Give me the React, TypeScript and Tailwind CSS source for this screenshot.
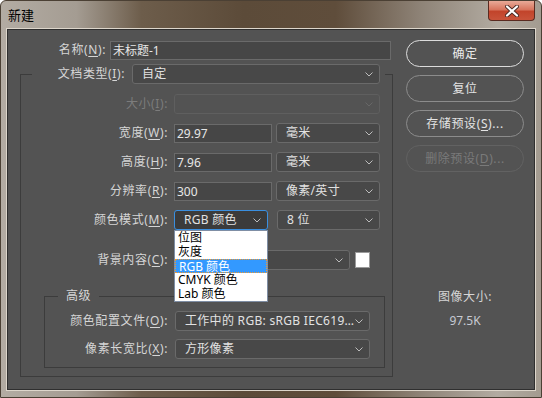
import React from 'react';

const font = "font-['Noto_Sans','Noto_Sans_CJK_SC',sans-serif]";

function Chevron({ dim }: { dim?: boolean }) {
  return (
    <svg width="8" height="5" viewBox="0 0 8 5" className="shrink-0">
      <path d="M0.5 0.5L4 4L7.5 0.5" fill="none" stroke={dim ? '#676767' : '#bdbdbd'} strokeWidth="1" />
    </svg>
  );
}

function Label({ t, k, w, dim }: { t: string; k: string; w: string; dim?: boolean }) {
  return (
    <div className={`shrink-0 text-right leading-[20px] tracking-[0.6px] ${w} ${dim ? 'text-[#7c7c7c]' : 'text-[#d6d6d6]'}`}>
      {t}(<span className="underline underline-offset-2">{k}</span>):
    </div>
  );
}

function Select({ w, text, disabled, focus, children }: {
  w: string; text?: string; disabled?: boolean; focus?: boolean; children?: React.ReactNode;
}) {
  const border = focus
    ? 'border-[#3a8fe0] bg-[#3b3b3b]'
    : disabled
      ? 'border-[#5f5f5f] bg-[#535353]'
      : 'border-[#6a6a6a] bg-[#484848]';
  return (
    <div className={`relative flex h-[20px] shrink-0 items-center justify-between rounded-[3px] border pl-[9px] pr-[6px] ${w} ${border}`}>
      <span className="truncate leading-[18px] tracking-[0.3px] text-[#e2e2e2]">{text}</span>
      <Chevron dim={disabled} />
      {children}
    </div>
  );
}

function Input({ w, value }: { w: string; value: string }) {
  return (
    <div className={`flex h-[19px] shrink-0 items-center border border-[#6a6a6a] bg-[#464646] pl-[2px] leading-[17px] text-[#e6e6e6] ${w}`}>
      {value}
    </div>
  );
}

function Button({ label, primary, disabled }: { label: React.ReactNode; primary?: boolean; disabled?: boolean }) {
  const cls = primary
    ? 'border-[#dcdcdc] text-[#ececec]'
    : disabled
      ? 'border-[#626262] text-[#7a7a7a]'
      : 'border-[#8c8c8c] text-[#e4e4e4]';
  return (
    <div className={`flex h-[27px] w-[118px] items-center justify-center rounded-full border tracking-[0.6px] ${cls}`}>
      {label}
    </div>
  );
}

const MODES = ['位图', '灰度', 'RGB 颜色', 'CMYK 颜色', 'Lab 颜色'];

function ModeList() {
  return (
    <div className="absolute left-[-1px] top-[19px] z-10 w-[94px] border border-[#7f8ea4] bg-white">
      {MODES.map(m => (
        <div key={m}
          className={`h-[14px] pl-[3px] leading-[14px] ${m === 'RGB 颜色'
            ? 'border border-dotted border-[#f09a30] bg-[#3399ff] pl-[2px] leading-[12px] text-white'
            : 'text-black'}`}>
          {m}
        </div>
      ))}
    </div>
  );
}

export default function App() {
  return (
    <div className={`${font} h-[398px] w-[542px] overflow-hidden rounded-t-[6px] border border-[#4b4034] bg-[linear-gradient(90deg,#b3aca3_0%,#a49c92_14%,#6d5d4b_26%,#5c4b39_45%,#5f4d3b_62%,#8f8478_78%,#b2aba1_92%,#a39b90_100%)] text-[12px]`}>
      <div className="flex h-[27px] items-start justify-between pl-[7px] pr-[6px]">
        <div className="pt-[5px] text-[13px] leading-[18px] text-black">新建</div>
        <div className="flex h-[20px] w-[47px] items-center justify-center rounded-b-[4px] border border-t-0 border-[#5a2a20] bg-[linear-gradient(180deg,#e9aa98_0%,#d8755e_45%,#c2442b_55%,#c8533a_100%)]">
          <svg width="14" height="12" viewBox="0 0 14 12">
            <path d="M2 1.5L12 10.5M12 1.5L2 10.5" stroke="#4a2a24" strokeWidth="4" strokeLinecap="round" />
            <path d="M2 1.5L12 10.5M12 1.5L2 10.5" stroke="#ffffff" strokeWidth="2.2" strokeLinecap="round" />
          </svg>
        </div>
      </div>

      <div className="ml-[5px] h-[363px] w-[530px] border border-[#ddd6cb]">
        <div className="flex h-full w-full border border-[#2f2f2f] bg-[#535353] pt-[10px]">
          {/* left column */}
          <div className="w-[383px] shrink-0 pl-[12px]">
            <div className="flex items-center gap-[4px]">
              <Label t="名称" k="N" w="w-[86px]" />
              <Input w="flex-1" value="未标题-1" />
            </div>

            <fieldset className="mr-[3px] mt-[4px] border border-[#3c3c3c] pb-[8px] pr-[7px] pt-[10px]">
              <legend className="ml-[11px] pr-[5px]">
                <div className="flex items-center gap-[7px]">
                  <Label t="文档类型" k="I" w="w-[93px]" />
                  <Select w="w-[248px]" text="自定" />
                </div>
              </legend>

              <div className="flex flex-col gap-[9px]">
                <div className="flex items-center gap-[6px]">
                  <Label t="大小" k="I" w="w-[147px]" dim />
                  <Select w="w-[206px]" disabled />
                </div>
                <div className="flex items-center gap-[6px]">
                  <Label t="宽度" k="W" w="w-[147px]" />
                  <Input w="w-[98px]" value="29.97" />
                  <div className="ml-[-2px]"><Select w="w-[104px]" text="毫米" /></div>
                </div>
                <div className="flex items-center gap-[6px]">
                  <Label t="高度" k="H" w="w-[147px]" />
                  <Input w="w-[98px]" value="7.96" />
                  <div className="ml-[-2px]"><Select w="w-[104px]" text="毫米" /></div>
                </div>
                <div className="flex items-center gap-[6px]">
                  <Label t="分辨率" k="R" w="w-[147px]" />
                  <Input w="w-[98px]" value="300" />
                  <div className="ml-[-2px]"><Select w="w-[104px]" text="像素/英寸" /></div>
                </div>
                <div className="flex items-center gap-[6px]">
                  <Label t="颜色模式" k="M" w="w-[147px]" />
                  <Select w="w-[94px]" text="RGB 颜色" focus>
                    <ModeList />
                  </Select>
                  <div className="ml-[3px]"><Select w="w-[103px]" text="8 位" /></div>
                </div>
              </div>

              <div className="mt-[20px] flex items-center gap-[6px]">
                <Label t="背景内容" k="C" w="w-[147px]" />
                <Select w="w-[176px]" />
                <div className="ml-[-1px] h-[16px] w-[15px] border border-[#9a9a9a] bg-white" />
              </div>

              <fieldset className="ml-[23px] mt-[18px] border border-[#3c3c3c] pb-[8px] pt-[7px]">
                <legend className="ml-[13px] px-[8px] leading-[16px] tracking-[0.6px] text-[#d6d6d6]">高级</legend>
                <div className="flex flex-col gap-[8px]">
                  <div className="flex items-center gap-[7px]">
                    <Label t="颜色配置文件" k="O" w="w-[123px]" />
                    <Select w="w-[195px]" text="工作中的 RGB: sRGB IEC619..." />
                  </div>
                  <div className="flex items-center gap-[7px]">
                    <Label t="像素长宽比" k="X" w="w-[123px]" />
                    <Select w="w-[195px]" text="方形像素" />
                  </div>
                </div>
              </fieldset>
            </fieldset>
          </div>

          {/* right column */}
          <div className="ml-[15px] flex w-[118px] flex-col">
            <div className="flex flex-col gap-[8px]">
              <Button label="确定" primary />
              <Button label="复位" />
              <Button label={<span>存储预设(<span className="underline underline-offset-2">S</span>)...</span>} />
              <Button label={<span>删除预设(<span className="underline underline-offset-2">D</span>)...</span>} disabled />
            </div>
            <div className="mt-[117px] text-center leading-[16px] tracking-[0.6px] text-[#d6d6d6]">图像大小:</div>
            <div className="mt-[8px] text-center leading-[16px] text-[#c6cad2]">97.5K</div>
          </div>
        </div>
      </div>
    </div>
  );
}
